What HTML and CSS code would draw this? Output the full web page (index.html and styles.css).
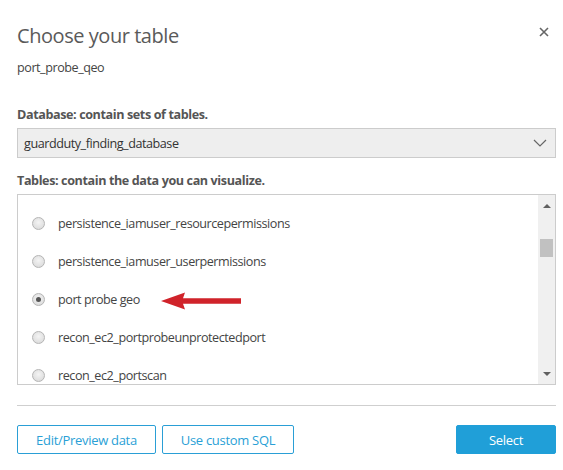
FILE: index.html
```html
<!DOCTYPE html>
<html>
<head>
<meta charset="utf-8">
<link rel="stylesheet" href="styles.css">
</head>
<body>
<div class="dialog">
  <div class="header">
    <h1 class="title">Choose your table</h1>
    <svg class="close" width="10" height="10" viewBox="0 0 10 10"><path d="M1 1 L9 9 M9 1 L1 9" stroke="#666" stroke-width="1.6"/></svg>
  </div>
  <div class="subtitle">port_probe_qeo</div>

  <div class="label db-label">Database: contain sets of tables.</div>
  <div class="select">
    <span>guardduty_finding_database</span>
    <svg class="chev" width="14" height="8" viewBox="0 0 14 8"><path d="M1 1 L7 7 L13 1" fill="none" stroke="#666" stroke-width="1.2"/></svg>
  </div>

  <div class="label tables-label">Tables: contain the data you can visualize.</div>
  <div class="listbox">
    <div class="items">
      <div class="item"><span class="radio"></span><span>persistence_iamuser_resourcepermissions</span></div>
      <div class="item"><span class="radio"></span><span>persistence_iamuser_userpermissions</span></div>
      <div class="item"><span class="radio checked"></span><span>port probe geo</span></div>
      <div class="item"><span class="radio"></span><span>recon_ec2_portprobeunprotectedport</span></div>
      <div class="item"><span class="radio"></span><span>recon_ec2_portscan</span></div>
    </div>
    <div class="scrollbar">
      <span class="tri up"></span>
      <span class="thumb"></span>
      <span class="spacer"></span>
      <span class="tri down"></span>
    </div>
    <svg class="arrow" width="82" height="20" viewBox="0 0 82 20"><polygon points="0,10 24,1.5 22,7.3 80,7.3 80,12.7 22,12.7 24,18.5" fill="#d0232a"/></svg>
  </div>

  <div class="divider"></div>

  <div class="footer">
    <button class="btn outline edit">Edit/Preview data</button>
    <button class="btn outline sql">Use custom SQL</button>
    <span class="grow"></span>
    <button class="btn primary">Select</button>
  </div>
</div>
</body>
</html>
```

FILE: styles.css
```css
html, body {
  margin: 0;
  padding: 0;
  background: #fff;
}
body {
  font-family: "Open Sans", "Noto Sans", sans-serif;
  color: #444;
}
.dialog {
  width: 539px;
  padding: 0 7px 0 17px;
}
.header {
  display: flex;
  align-items: flex-start;
  justify-content: space-between;
  padding-top: 23px;
}
.title {
  margin: 0;
  font-weight: normal;
  font-size: 20px;
  line-height: 26px;
  color: #5a5a5a;
  letter-spacing: -0.45px;
}
.close {
  margin: 4px 7px 0 0;
}
.subtitle {
  margin-top: 10px;
  font-size: 12.6px;
  line-height: 18px;
  color: #444;
  letter-spacing: -0.45px;
}
.label {
  font-size: 12.6px;
  font-weight: bold;
  line-height: 18px;
  color: #555;
  letter-spacing: -0.4px;
}
.db-label {
  margin-top: 29px;
}
.select {
  margin-top: 4px;
  height: 30px;
  box-sizing: border-box;
  border: 1px solid #ccc;
  background: #eeeeee;
  display: flex;
  align-items: center;
  justify-content: space-between;
  padding: 0 8px 0 6px;
  font-size: 12.6px;
  color: #333;
  letter-spacing: -0.45px;
}
.tables-label {
  margin-top: 14px;
}
.listbox {
  position: relative;
  margin-top: 4px;
  height: 191px;
  box-sizing: border-box;
  border: 1px solid #ccc;
  display: flex;
  overflow: hidden;
}
.items {
  flex: 1;
  padding-top: 9px;
}
.item {
  height: 38px;
  display: flex;
  align-items: center;
  gap: 13px;
  padding-left: 14px;
  font-size: 12.6px;
  color: #444;
  letter-spacing: -0.45px;
}
.radio {
  width: 11px;
  height: 11px;
  border-radius: 50%;
  border: 1px solid #b5b5b5;
  background: radial-gradient(circle at 50% 40%, #f4f4f4, #d6d6d6);
  flex: none;
  position: relative;
}
.radio.checked::after {
  content: "";
  position: absolute;
  left: 3px;
  top: 3px;
  width: 5px;
  height: 5px;
  border-radius: 50%;
  background: #555;
}
.scrollbar {
  width: 17px;
  background: #f0f0f0;
  display: flex;
  flex-direction: column;
  align-items: center;
  padding: 9px 0 8px;
  box-sizing: border-box;
}
.tri {
  width: 0;
  height: 0;
  border-left: 4px solid transparent;
  border-right: 4px solid transparent;
}
.tri.up {
  border-bottom: 4px solid #606060;
}
.tri.down {
  border-top: 4px solid #606060;
}
.thumb {
  width: 13px;
  height: 18px;
  background: #c1c1c1;
  margin-top: 31px;
}
.spacer {
  flex: 1;
}
.arrow {
  position: absolute;
  left: 143px;
  top: 96px;
}
.divider {
  margin-top: 20px;
  height: 1px;
  background: #cfcfcf;
}
.footer {
  display: flex;
  gap: 6px;
  margin-top: 19px;
}
.grow {
  flex: 1;
}
.btn {
  height: 29px;
  box-sizing: border-box;
  font-family: inherit;
  font-size: 13px;
  letter-spacing: -0.3px;
  border-radius: 2px;
  cursor: pointer;
}
.btn.outline {
  background: #fff;
  border: 1px solid #2a9fd6;
  color: #2a9fd6;
}
.btn.edit {
  width: 139px;
}
.btn.sql {
  width: 132px;
}
.btn.primary {
  width: 100px;
  background: #209fd8;
  border: 1px solid #209fd8;
  color: #fff;
}
```
